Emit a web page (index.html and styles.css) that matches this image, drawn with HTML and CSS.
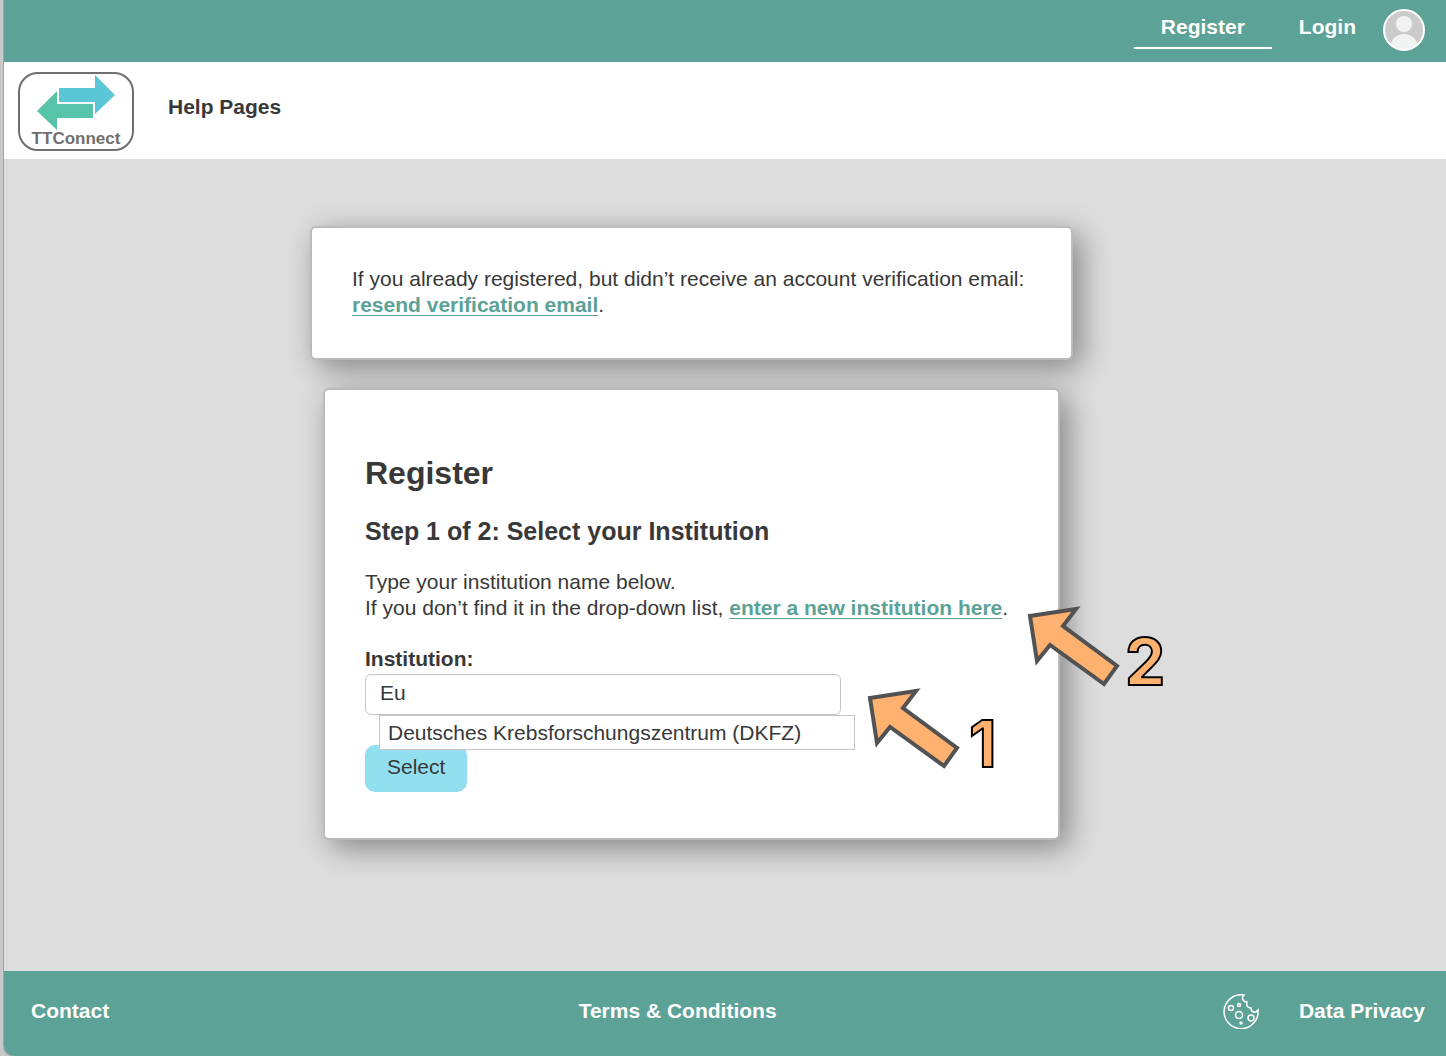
FILE: index.html
```html
<!DOCTYPE html>
<html lang="en">
  <head>
    <title>TTConnect - Register</title>
    <meta charset="utf-8" />
    <meta name="viewport" content="width=device-width" />
    <link rel="stylesheet" href="styles.css">
  </head>
  <body>
    <div class="page">
      <nav class="topbar">
        <a class="tab active" href="#">Register</a>
        <a class="tab" href="#">Login</a>
        <svg class="avatar" viewBox="0 0 42 42">
          <clipPath id="face"><circle cx="21" cy="21" r="20" /></clipPath>
          <circle cx="21" cy="21" r="20" fill="#cbcbcb" />
          <g clip-path="url(#face)" fill="#f1f2f2">
            <circle cx="21" cy="15" r="8" />
            <path d="M6 42C7 31 13 25 21 25s14 6 15 17z" />
          </g>
          <circle cx="21" cy="21" r="20" fill="none" stroke="#fff" stroke-width="2" />
        </svg>
      </nav>

      <header class="menu">
        <a class="logo" href="#">
          <svg viewBox="0 0 116 79">
            <rect x="1" y="1" width="114" height="77" rx="19" fill="#fff" stroke="#707070" stroke-width="2" />
            <path d="M41 16H77V3L97 23L77 42V30H41z" fill="#5bc6d5" />
            <path d="M19 39L39 19V32H75V46H39V58z" fill="#57c4a9" />
            <text class="logo-text" x="58" y="72" text-anchor="middle">TTConnect</text>
          </svg>
        </a>
        <a class="help" href="#">Help Pages</a>
      </header>

      <main>
        <section class="card resend">
          <p>If you already registered, but didn’t receive an account verification email:<br>
          <a href="#">resend verification email</a>.</p>
        </section>

        <section class="card register">
          <h1>Register</h1>
          <h2>Step 1 of 2: Select your Institution</h2>
          <p>Type your institution name below.<br>
          If you don’t find it in the drop-down list, <a href="#">enter a new institution here</a>.</p>

          <form>
            <label for="institution">Institution:</label>
            <div class="field">
              <input id="institution" type="text" value="Eu" autocomplete="off" />
              <ul class="suggestions">
                <li>Deutsches Krebsforschungszentrum (DKFZ)</li>
              </ul>
            </div>
            <button type="button">Select</button>
          </form>

          <svg class="hint hint-1" viewBox="0 0 160 110">
            <path d="M4 11L50 4L37 21L91 61L78 79L24 40L11 56z" />
            <text x="103" y="80">1</text>
          </svg>
          <svg class="hint hint-2" viewBox="0 0 160 110">
            <path d="M4 11L50 4L37 21L91 61L78 79L24 40L11 56z" />
            <text x="99" y="80">2</text>
          </svg>
        </section>
      </main>

      <footer>
        <a href="#">Contact</a>
        <div class="legal">
          <a href="#">Terms &amp; Conditions</a>
          <div class="privacy">
            <svg class="cookie" viewBox="0 0 36 36">
              <path d="M21 2A17 17 0 1 0 35 17C32 21 28 19 28 15C25 15 23 13 24 9C20 9 18 5 21 2z" />
              <circle cx="8" cy="15" r="2.5" />
              <circle cx="16" cy="12" r="1.5" />
              <circle cx="16" cy="22" r="3.5" />
              <circle cx="28" cy="25" r="3" />
              <circle cx="18" cy="30" r="1" />
            </svg>
            <a href="#">Data Privacy</a>
          </div>
        </div>
      </footer>
    </div>
  </body>
</html>
```
FILE: styles.css
```css
* {
  box-sizing: border-box;
}

html {
  background: #c8c8c8;
}

body {
  margin: 0;
  padding-left: 4px;
  font-family: "Liberation Sans", Arial, sans-serif;
  font-size: 21px;
  line-height: 26px;
  color: #383838;
}

.page {
  display: flex;
  flex-direction: column;
  min-height: 100vh;
  background: #ddd;
  border-radius: 0 0 0 10px;
  box-shadow: 0 0 0 1px #a4a4a4;
  overflow: hidden;
}

a {
  color: #5da296;
  font-weight: bold;
  text-decoration-thickness: 1px;
  text-underline-offset: 3px;
}

/* top bar */
.topbar {
  display: flex;
  justify-content: flex-end;
  align-items: flex-start;
  height: 62px;
  padding: 9px 21px 0 0;
  background: #5da296;
}

.tab {
  height: 40px;
  padding: 5px 27px 0;
  color: #fff;
  text-decoration: none;
}

.tab.active {
  border-bottom: 2px solid #fff;
}

.avatar {
  width: 42px;
  height: 42px;
}

.menu {
  display: flex;
  align-items: flex-start;
  gap: 34px;
  height: 97px;
  padding: 10px 14px;
  background: #fff;
}

.logo svg {
  display: block;
  width: 116px;
  height: 79px;
}

.logo-text {
  font-size: 17px;
  font-weight: bold;
  fill: #707070;
}

.help {
  padding-top: 22px;
  color: #383838;
  text-decoration: none;
}

/* content */
main {
  flex: 1;
  display: flex;
  flex-direction: column;
  align-items: center;
  gap: 28px;
  padding: 67px 67px 67px 0;
}

.card {
  position: relative;
  max-width: 100%;
  padding: 38px 40px 40px;
  background: #fff;
  border: 2px solid #bbb;
  border-radius: 6px;
  box-shadow: 8px 8px 30px rgba(0, 0, 0, 0.4);
}

.resend {
  width: 763px;
}

.register {
  width: 737px;
  padding: 64px 40px 46px;
}

p {
  margin: 0;
}

h1 {
  margin: 0 0 24px;
  font-size: 32px;
  line-height: 38px;
}

h2 {
  margin: 0 0 23px;
  font-size: 25px;
  line-height: 30px;
}

form {
  margin-top: 25px;
}

label {
  display: block;
  font-weight: bold;
}

.field {
  position: relative;
  width: 476px;
  max-width: 100%;
  margin: 2px 0 30px;
}

input {
  display: block;
  width: 100%;
  height: 41px;
  padding: 0 14px 4px;
  font: inherit;
  color: inherit;
  background: #fff;
  border: 1px solid #c4c4c4;
  border-radius: 6px;
}

.suggestions {
  position: absolute;
  top: 100%;
  left: 14px;
  width: 100%;
  margin: 0;
  padding: 4px 8px 3px;
  list-style: none;
  background: #fff;
  border: 1px solid #c4c4c4;
}

button {
  display: block;
  height: 47px;
  padding: 0 22px 4px;
  font: inherit;
  color: inherit;
  background: #92e0ef;
  border: 0;
  border-radius: 10px;
}

/* numbered arrows */
.hint {
  position: absolute;
  width: 160px;
  height: 110px;
  pointer-events: none;
}

.hint path {
  fill: #ffb170;
  stroke: #525252;
  stroke-width: 4;
}

.hint text {
  font-family: Inter, sans-serif;
  font-size: 64px;
  font-weight: bold;
  fill: #ffb170;
  stroke: #000;
  stroke-width: 2;
}

.hint-1 {
  left: 541px;
  top: 297px;
}

.hint-2 {
  left: 701px;
  top: 215px;
}

/* footer */
footer {
  display: grid;
  grid-template-columns: 11fr 17fr;
  align-items: center;
  height: 85px;
  padding: 0 21px 6px 27px;
  background: #5da296;
}

footer a {
  color: #fff;
  text-decoration: none;
}

.legal,
.privacy {
  display: flex;
  justify-content: space-between;
  align-items: center;
}

.privacy {
  gap: 40px;
}

.cookie {
  width: 36px;
  height: 36px;
  fill: none;
  stroke: #fff;
  stroke-width: 1.5;
}
```
